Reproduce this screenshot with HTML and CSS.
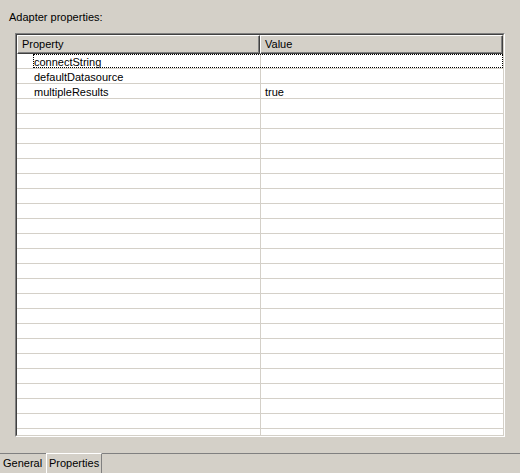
FILE: index.html
```html
<!DOCTYPE html>
<html>
<head>
<meta charset="utf-8">
<link rel="stylesheet" href="styles.css">
</head>
<body>
<div class="page">
  <div class="title">Adapter properties:</div>
  <div class="frame">
    <div class="frame-inner">
      <div class="header">
        <div class="hcell">Property</div>
        <div class="hcell">Value</div>
      </div>
      <div class="body">
        <div class="row focus"><div class="c1">connectString</div><div class="c2"></div></div>
        <div class="row"><div class="c1">defaultDatasource</div><div class="c2"></div></div>
        <div class="row"><div class="c1">multipleResults</div><div class="c2">true</div></div>
        <div class="row"><div class="c1"></div><div class="c2"></div></div>
        <div class="row"><div class="c1"></div><div class="c2"></div></div>
        <div class="row"><div class="c1"></div><div class="c2"></div></div>
        <div class="row"><div class="c1"></div><div class="c2"></div></div>
        <div class="row"><div class="c1"></div><div class="c2"></div></div>
        <div class="row"><div class="c1"></div><div class="c2"></div></div>
        <div class="row"><div class="c1"></div><div class="c2"></div></div>
        <div class="row"><div class="c1"></div><div class="c2"></div></div>
        <div class="row"><div class="c1"></div><div class="c2"></div></div>
        <div class="row"><div class="c1"></div><div class="c2"></div></div>
        <div class="row"><div class="c1"></div><div class="c2"></div></div>
        <div class="row"><div class="c1"></div><div class="c2"></div></div>
        <div class="row"><div class="c1"></div><div class="c2"></div></div>
        <div class="row"><div class="c1"></div><div class="c2"></div></div>
        <div class="row"><div class="c1"></div><div class="c2"></div></div>
        <div class="row"><div class="c1"></div><div class="c2"></div></div>
        <div class="row"><div class="c1"></div><div class="c2"></div></div>
        <div class="row"><div class="c1"></div><div class="c2"></div></div>
        <div class="row"><div class="c1"></div><div class="c2"></div></div>
        <div class="row"><div class="c1"></div><div class="c2"></div></div>
        <div class="row"><div class="c1"></div><div class="c2"></div></div>
        <div class="row"><div class="c1"></div><div class="c2"></div></div>
        <div class="row"><div class="c1"></div><div class="c2"></div></div>
        <div class="row"><div class="c1"></div><div class="c2"></div></div>
      </div>
    </div>
  </div>
  <div class="tabs">
    <div class="tab">General</div>
    <div class="tab active">Properties</div>
    <div class="tab-fill"></div>
  </div>
</div>
</body>
</html>
```

FILE: styles.css
```css
* { box-sizing: border-box; }
html, body {
  margin: 0;
  padding: 0;
  background: #d4d0c8;
}
body {
  font-family: "Liberation Sans", Arial, sans-serif;
  font-size: 11px;
  line-height: 13px;
  color: #000;
}
.page {
  width: 520px;
  height: 473px;
  overflow: hidden;
  display: flex;
  flex-direction: column;
}
.title {
  padding: 11px 0 0 9px;
  height: 33px;
}
.frame {
  margin-left: 15px;
  width: 490px;
  height: 404px;
  border: 1px solid;
  border-color: #808080 #ffffff #ffffff #808080;
}
.frame-inner {
  width: 100%;
  height: 100%;
  border: 1px solid;
  border-color: #404040 #d4d0c8 #d4d0c8 #404040;
  background: #fff;
  display: flex;
  flex-direction: column;
}
.header {
  display: flex;
  height: 19px;
  flex: none;
}
.hcell {
  width: 243px;
  height: 19px;
  background: #d4d0c8;
  border: 1px solid;
  border-color: #ffffff #404040 #404040 #ffffff;
  box-shadow: inset -1px -1px 0 #808080;
  padding: 2px 0 0 4px;
}
.body {
  flex: 1;
  overflow: hidden;
}
.row {
  position: relative;
  display: flex;
  height: 15px;
  border-bottom: 1px solid #d4d0c8;
}
.c1 {
  width: 243px;
  padding: 2px 0 0 17px;
}
.c2 {
  flex: 1;
  border-left: 1px solid #d4d0c8;
  padding: 2px 0 0 4px;
}
.focus::after {
  content: "";
  position: absolute;
  left: 16px;
  right: 0;
  top: 0;
  bottom: 0;
  border: 1px dotted #000;
}
.tabs {
  margin-top: 16px;
  display: flex;
  height: 20px;
}
.tab {
  height: 20px;
  border-top: 1px solid #808080;
  padding: 3px 0 0 3px;
  width: 46px;
  white-space: nowrap;
}
.tab.active {
  width: 56px;
  border-top: 1px solid #ffffff;
  border-left: 1px solid #ffffff;
  border-right: 1px solid #808080;
  padding-left: 2px;
}
.tab-fill {
  flex: 1;
  border-top: 1px solid #808080;
}
```
